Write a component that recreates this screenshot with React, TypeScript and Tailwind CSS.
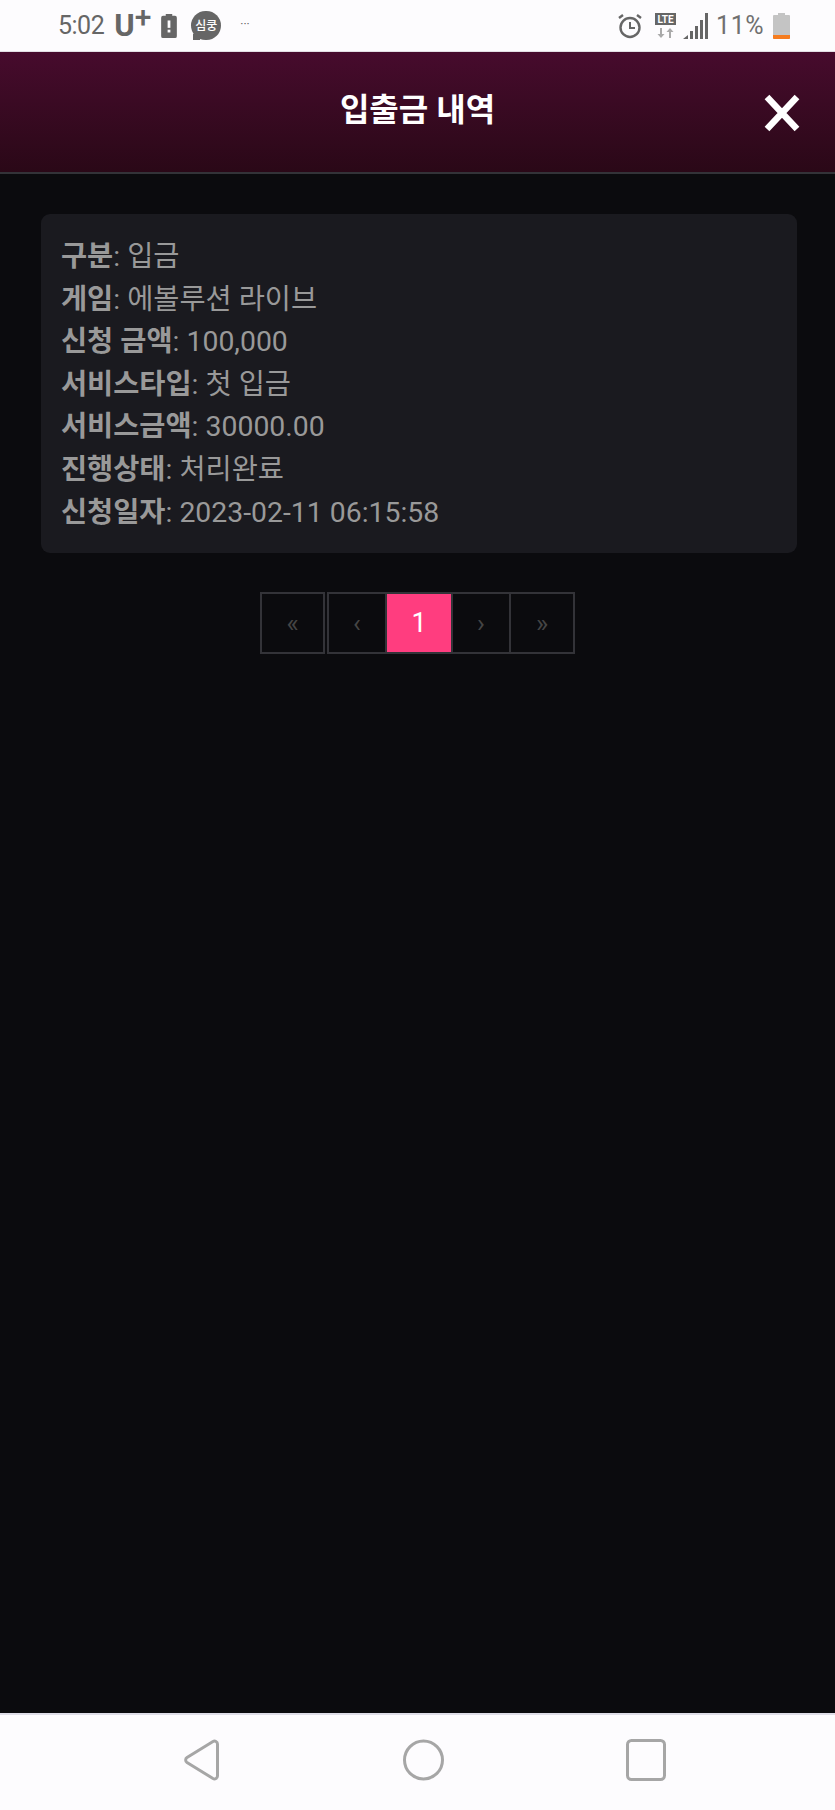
const rows = [
  { label: "구분", value: "입금" },
  { label: "게임", value: "에볼루션 라이브" },
  { label: "신청 금액", value: "100,000" },
  { label: "서비스타입", value: "첫 입금" },
  { label: "서비스금액", value: "30000.00" },
  { label: "진행상태", value: "처리완료" },
  { label: "신청일자", value: "2023-02-11 06:15:58" },
];

function StatusBar() {
  return (
    <div className="h-[52px] bg-[#fdfcfe] flex items-center justify-between pl-[58px] pr-[45px] text-[#666666] border-b border-[#e2dfe4]">
      <div className="flex items-center">
        <span className="text-[25px] tracking-[-0.5px]">5:02</span>
        <span className="ml-[10px] text-[31px] font-bold leading-none">U</span>
        <span className="text-[30px] font-medium leading-none -mt-[17px]">+</span>
        <svg width="16" height="24" viewBox="0 0 17 26" className="ml-[10px]">
          <path d="M5 0h7v2h3a2 2 0 0 1 2 2v20a2 2 0 0 1-2 2H2a2 2 0 0 1-2-2V4a2 2 0 0 1 2-2h3z" fill="#666" />
          <rect x="7" y="7" width="3" height="8" fill="#fdfcfe" />
          <rect x="7" y="17" width="3" height="3" fill="#fdfcfe" />
        </svg>
        <div className="ml-[14px] w-[30px] h-[29px] rounded-full bg-[#666666] text-white text-[12px] font-medium flex items-center justify-center relative">
          심쿵
          <div className="absolute left-[2px] bottom-0 w-[7px] h-[6px] bg-[#666666]" />
        </div>
        <span className="ml-[19px] text-[12px] -mt-[3px]">···</span>
      </div>
      <div className="flex items-center">
        <svg width="24" height="26" viewBox="0 0 24 26" fill="none" stroke="#666" strokeWidth="2.4">
          <circle cx="12" cy="14.5" r="9.5" />
          <path d="M12 9v6h5" strokeWidth="2" />
          <path d="M1 5l4-3M23 5l-4-3" />
        </svg>
        <svg width="21" height="26" viewBox="0 0 21 26" className="ml-[13px]">
          <rect width="21" height="12" fill="#666" />
          <text x="10.5" y="10" textAnchor="middle" fontSize="10" fontWeight="700" fill="#fff" fontFamily="Roboto, sans-serif">LTE</text>
          <path d="M5 15v6h-2.500l3.500 4 3.500-4H7v-6z" fill="#aaa" />
          <path d="M16 25v-6h2.500L15 15l-3.500 4H14v6z" fill="#aaa" />
        </svg>
        <svg width="26" height="26" viewBox="0 0 26 26" fill="#666" className="ml-[7px]">
          <path d="M0 26l5-4v4z" />
          <rect x="7" y="18" width="3" height="8" />
          <rect x="12" y="13" width="3" height="13" />
          <rect x="17" y="7" width="3" height="19" />
          <rect x="22" y="0" width="3" height="26" />
        </svg>
        <span className="ml-[7px] text-[25px] tracking-[0.5px] text-[#707070]">11%</span>
        <div className="ml-[9px] w-[17px] h-[26px] relative">
          <div className="absolute top-0 left-[5px] w-[7px] h-[3px] bg-[#c4c4c4]" />
          <div className="absolute top-[2px] inset-x-0 bottom-0 bg-[#c4c4c4] rounded-[1px] overflow-hidden flex flex-col justify-end">
            <div className="h-[4px] bg-[#f57c1f]" />
          </div>
        </div>
      </div>
    </div>
  );
}

function PageButton({ label, width, active }: { label: string; width: string; active?: boolean }) {
  return (
    <div
      className={`${width} h-full flex items-center justify-center border-2 border-[#333338] -ml-[2px] first:ml-0 ${
        active ? "bg-[#ff3d7f] text-white text-[27px]" : "text-[#454545] text-[26px]"
      }`}
    >
      {label}
    </div>
  );
}

export default function App() {
  return (
    <div className="w-[835px] h-[1810px] flex flex-col bg-[#0b0b0e] font-['Roboto','Noto_Sans_CJK_KR',sans-serif]">
      <StatusBar />

      {/* 헤더 */}
      <header className="h-[122px] shrink-0 flex items-center justify-center relative bg-gradient-to-b from-[#470b2d] to-[#2a0817] border-b-2 border-[#333338]">
        <h1 className="text-white text-[32px] font-bold -mt-[4px]">입출금 내역</h1>
        <button className="absolute right-[35px] top-[42px]">
          <svg width="36" height="38" viewBox="0 0 36 38" fill="none" stroke="#ffffff" strokeWidth="6.500">
            <path d="M3 3l30 32M33 3L3 35" />
          </svg>
        </button>
      </header>

      <main className="flex-1 pt-[40px] px-[41px]">
        <div className="w-[756px] h-[339px] rounded-[9px] bg-[#1a1a1f] pt-[22px] pl-[20px] text-[#999999] text-[28.400px] leading-[42.600px]">
          {rows.map((row) => (
            <div key={row.label} className="whitespace-nowrap">
              <span className="font-bold">{row.label}</span>: {row.value}
            </div>
          ))}
        </div>

        {/* 페이지네이션 */}
        <div className="mt-[39px] flex justify-start h-[62px] pl-[219px]">
          <div className="flex h-full mr-[2px]">
            <PageButton label="«" width="w-[65px]" />
          </div>
          <div className="flex h-full">
            <PageButton label="‹" width="w-[60px]" />
            <PageButton label="1" width="w-[68px]" active />
            <PageButton label="›" width="w-[60px]" />
            <PageButton label="»" width="w-[66px]" />
          </div>
        </div>
      </main>

      {/* 하단 내비게이션 */}
      <nav className="h-[97px] shrink-0 bg-[#fdfcfe] border-t-2 border-[#dfdee8] flex items-center pl-[184px]">
        <div className="flex items-center -mt-[5px]">
          <svg width="35" height="42" viewBox="0 0 35 42" fill="none" stroke="#a6a6a6" strokeWidth="3">
            <path d="M29 2.500a3 3 0 0 1 4.500 2.500v32a3 3 0 0 1-4.500 2.500L3 23.500a3 3 0 0 1 0-5z" strokeLinejoin="round" />
          </svg>
          <svg width="41" height="42" viewBox="0 0 41 42" fill="none" stroke="#a6a6a6" strokeWidth="3" className="ml-[184px]">
            <circle cx="20.500" cy="21" r="19" />
          </svg>
          <svg width="40" height="42" viewBox="0 0 40 42" fill="none" stroke="#a6a6a6" strokeWidth="3" className="ml-[182px]">
            <rect x="1.500" y="1.500" width="37" height="39" rx="4" />
          </svg>
        </div>
      </nav>
    </div>
  );
}
